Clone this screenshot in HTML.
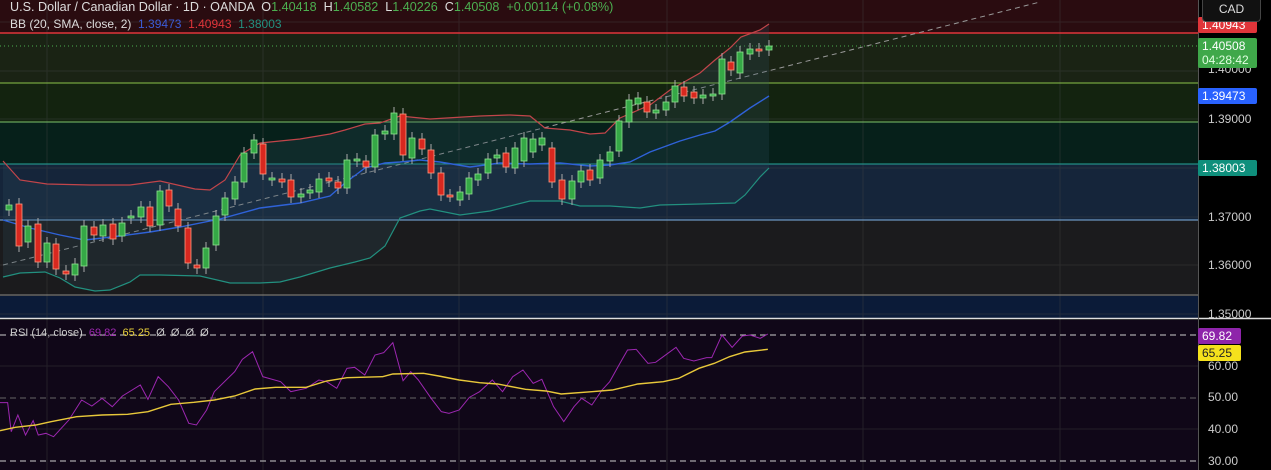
<!DOCTYPE html>
<html><head><meta charset="utf-8"><style>
html,body{margin:0;padding:0;background:#000;}
body{width:1271px;height:470px;overflow:hidden;position:relative;font-family:"Liberation Sans",sans-serif;}
.t{position:absolute;font-size:11px;white-space:nowrap;}
.lbl{position:absolute;left:1198px;width:59px;height:16px;border-radius:2px;color:#fff;font-size:12px;line-height:16px;padding-left:4px;box-sizing:border-box;}
.ax{position:absolute;left:1208px;color:#ccc;font-size:12px;}
</style></head><body>
<svg width="1271" height="470" style="position:absolute;left:0;top:0">
<rect x="0" y="0" width="1198" height="33" fill="#2a0c10"/>
<rect x="0" y="33" width="1198" height="50" fill="#1a2314"/>
<rect x="0" y="83" width="1198" height="39" fill="#13230f"/>
<rect x="0" y="122" width="1198" height="42" fill="#06201a"/>
<rect x="0" y="164" width="1198" height="56" fill="#15253a"/>
<rect x="0" y="220" width="1198" height="76" fill="#1b1b1d"/>
<rect x="0" y="296" width="1198" height="22" fill="#0b1b38"/>
<rect x="0" y="320" width="1198" height="150" fill="#100718"/>
<rect x="1198" y="0" width="73" height="470" fill="#000"/>
<g stroke="#444" stroke-width="1" opacity="0.4">
<line x1="47" y1="0" x2="47" y2="470"/><line x1="263" y1="0" x2="263" y2="470"/><line x1="459" y1="0" x2="459" y2="470"/><line x1="667" y1="0" x2="667" y2="470"/><line x1="863" y1="0" x2="863" y2="470"/><line x1="1060" y1="0" x2="1060" y2="470"/>
<line x1="0" y1="22" x2="1198" y2="22"/><line x1="0" y1="71" x2="1198" y2="71"/><line x1="0" y1="119" x2="1198" y2="119"/><line x1="0" y1="168" x2="1198" y2="168"/><line x1="0" y1="217" x2="1198" y2="217"/><line x1="0" y1="265" x2="1198" y2="265"/><line x1="0" y1="314" x2="1198" y2="314"/>
<line x1="0" y1="366" x2="1198" y2="366"/><line x1="0" y1="429" x2="1198" y2="429"/>
</g>
<line x1="0" y1="398" x2="1198" y2="398" stroke="#666" stroke-dasharray="6,4"/>
<line x1="0" y1="335" x2="1198" y2="335" stroke="#ccc" stroke-dasharray="6,4"/>
<line x1="0" y1="461" x2="1198" y2="461" stroke="#ccc" stroke-dasharray="6,4"/>
<line x1="0" y1="33" x2="1198" y2="33" stroke="#e0353a" stroke-width="1.5"/>
<line x1="0" y1="46" x2="1198" y2="46" stroke="#4caf50" stroke-dasharray="1,3"/>
<line x1="0" y1="83" x2="1198" y2="83" stroke="#8bc34a"/>
<line x1="0" y1="122" x2="1198" y2="122" stroke="#7cc36a"/>
<line x1="0" y1="164" x2="1198" y2="164" stroke="#26a69a"/>
<line x1="0" y1="220" x2="1198" y2="220" stroke="#7fb3e6"/>
<line x1="0" y1="295" x2="1198" y2="295" stroke="#888"/>
<line x1="0" y1="318.5" x2="1271" y2="318.5" stroke="#ddd" stroke-width="1.5"/>
<line x1="1198.5" y1="0" x2="1198.5" y2="470" stroke="#555"/>
<line x1="3" y1="265" x2="1040" y2="2" stroke="#999" stroke-dasharray="5,4"/>
<polygon fill="#2a4a5a" opacity="0.25" points="3,161 20,180 47,184 90,185 130,185 160,181 195,189 210,190 225,180 240,155 260,143 280,141 300,139 330,134 345,130 365,124 380,123 400,116 430,119 480,116 510,115 530,116 545,128 570,130 590,134 605,133 620,118 650,105 670,90 700,73 715,60 730,48 741,37 760,30 769,24 769,168 760,177 745,195 735,203 700,204 660,205 640,208 610,206 580,206 560,201 530,201 490,211 460,215 430,209 420,211 400,218 385,246 370,258 355,262 330,268 300,277 280,282 260,283 230,283 200,276 160,275 140,275 130,282 110,290 95,291 75,287 60,278 45,272 20,273 3,277"/>
<polyline fill="none" stroke="#c2454a" stroke-width="1.2" points="3,161 20,180 47,184 90,185 130,185 160,181 195,189 210,190 225,180 240,155 260,143 280,141 300,139 330,134 345,130 365,124 380,123 400,116 430,119 480,116 510,115 530,116 545,128 570,130 590,134 605,133 620,118 650,105 670,90 700,73 715,60 730,48 741,37 760,30 769,24"/>
<polyline fill="none" stroke="#2f62d8" stroke-width="1.4" points="3,220 30,228 60,235 85,240 120,236 150,232 180,227 220,219 260,208 300,203 330,196 345,183 365,168 385,163 400,162 420,160 440,162 470,167 500,163 530,164 560,163 590,166 610,165 630,162 650,152 680,141 700,135 715,131 730,122 750,108 769,96"/>
<polyline fill="none" stroke="#22907f" stroke-width="1.2" points="3,277 20,273 45,272 60,278 75,287 95,291 110,290 130,282 140,275 160,275 200,276 230,283 260,283 280,282 300,277 330,268 355,262 370,258 385,246 400,218 420,211 430,209 460,215 490,211 530,201 560,201 580,206 610,206 640,208 660,205 700,204 735,203 745,195 760,177 769,168"/>
<g id="candles"></g>
<g transform="translate(0,310) scale(0.5102,0.33333)">
<polyline fill="none" stroke="#9c27b0" stroke-width="1" vector-effect="non-scaling-stroke" points="0,278 15,278 22,365 35,315 50,375 65,332 75,375 90,370 105,380 120,355 135,330 160,270 180,288 200,265 220,290 240,258 275,225 290,268 310,200 330,230 350,270 370,340 385,345 405,300 420,245 460,185 475,148 495,125 515,200 550,215 570,245 600,235 625,210 640,215 660,235 680,175 695,172 715,195 735,135 752,128 770,98 790,212 805,185 820,210 845,265 865,305 880,310 900,300 920,262 940,245 965,210 985,245 1005,200 1025,180 1045,220 1062,208 1085,290 1105,335 1125,290 1140,265 1160,285 1180,240 1195,215 1215,160 1230,120 1247,118 1270,160 1285,157 1300,140 1325,112 1340,145 1360,153 1385,143 1395,143 1415,75 1435,112 1455,78 1470,75 1490,85 1505,72"/>
<polyline fill="none" stroke="#e8c83a" stroke-width="1.4" vector-effect="non-scaling-stroke" points="0,362 30,352 70,345 100,335 150,320 200,315 250,313 290,305 335,283 380,277 420,270 460,258 500,237 540,232 600,232 640,213 680,203 750,200 770,192 830,190 860,198 900,210 940,218 975,222 1030,238 1070,243 1100,252 1160,245 1200,240 1250,222 1300,215 1330,205 1370,175 1400,160 1430,140 1460,126 1505,118"/>
</g>
</svg>
<div class="t" style="left:10px;top:0px;color:#ddd;font-size:12.6px">U.S. Dollar / Canadian Dollar · 1D · OANDA &nbsp;O<span style="color:#4caf50">1.40418</span> &nbsp;H<span style="color:#4caf50">1.40582</span> &nbsp;L<span style="color:#4caf50">1.40226</span> &nbsp;C<span style="color:#4caf50">1.40508</span> &nbsp;<span style="color:#4caf50">+0.00114 (+0.08%)</span></div>
<div class="t" style="left:10px;top:17px;color:#ddd;font-size:12px">BB (20, SMA, close, 2) &nbsp;<span style="color:#3b5bd6">1.39473</span> &nbsp;<span style="color:#e0353a">1.40943</span> &nbsp;<span style="color:#22907f">1.38003</span></div>
<div class="t" style="left:10px;top:327px;color:#ccc;font-size:11px">RSI (14, close) &nbsp;<span style="color:#9c27b0">69.82</span> &nbsp;<span style="color:#e8d03a">65.25</span> &nbsp;Ø &nbsp;Ø &nbsp;Ø &nbsp;Ø</div>
<div class="lbl" style="top:17px;background:#e0353a">1.40943</div>
<div style="position:absolute;left:1202px;top:0;width:57px;height:21px;border:1px solid #444;border-top:none;border-radius:0 0 4px 4px;background:#111;color:#ddd;font-size:12px;text-align:center;line-height:19px">CAD</div>
<div class="ax" style="top:62px">1.40000</div>
<div class="lbl" style="top:38px;height:30px;background:#3fa84a;line-height:14px;padding-top:1px">1.40508<br><span style="color:#e0ffe0">04:28:42</span></div>
<div class="lbl" style="top:88px;background:#2962ff">1.39473</div>
<div class="ax" style="top:112px">1.39000</div>
<div class="lbl" style="top:160px;background:#0f8f7c">1.38003</div>
<div class="ax" style="top:210px">1.37000</div>
<div class="ax" style="top:258px">1.36000</div>
<div class="ax" style="top:307px">1.35000</div>
<div class="lbl" style="top:328px;width:43px;background:#8e24aa">69.82</div>
<div class="lbl" style="top:345px;width:43px;background:#f5e11c;color:#222">65.25</div>
<div class="ax" style="top:359px">60.00</div>
<div class="ax" style="top:390px">50.00</div>
<div class="ax" style="top:422px">40.00</div>
<div class="ax" style="top:454px">30.00</div>
<script>
var c=[[9,210,205],[19,204,246],[28,242,226],[38,224,262],[47,262,243],[56,244,269],[66,271,274],[75,275,264],[84,266,226],[94,227,235],[103,236,225],[113,224,239],[122,236,223],[131,218,216],[141,217,207],[150,207,226],[160,225,191],[169,190,206],[178,209,226],[188,228,263],[197,265,268],[206,268,248],[216,245,216],[225,215,198],[235,199,182],[244,182,153],[254,153,140],[263,144,174],[272,180,178],[282,179,182],[291,180,197],[301,197,194],[310,193,190],[319,192,179],[329,178,181],[338,182,188],[347,188,160],[357,161,159],[366,161,167],[375,167,135],[385,134,131],[394,134,113],[403,114,155],[412,158,138],[422,139,149],[431,150,173],[441,173,195],[450,195,196],[460,200,192],[469,194,178],[478,180,174],[488,173,159],[497,158,155],[506,153,167],[515,168,148],[524,161,138],[533,152,139],[542,145,138],[552,148,182],[562,180,199],[572,199,181],[581,182,171],[590,170,180],[600,178,160],[610,161,152],[619,151,121],[629,122,100],[638,104,98],[647,102,112],[656,113,110],[666,110,102],[675,102,86],[684,87,96],[694,92,98],[703,98,95],[713,95,94],[722,94,59],[731,62,70],[740,73,52],[750,54,49],[759,49,51],[769,50,46]];
var s='';c.forEach(function(d){var x=d[0],o=d[1],cl=d[2],up=cl<o,t=Math.min(o,cl),b=Math.max(o,cl),h=Math.max(b-t,2);
s+='<line x1="'+x+'" x2="'+x+'" y1="'+(t-6)+'" y2="'+(b+6)+'" stroke="#aaa"/>';
s+='<rect x="'+(x-3)+'" y="'+t+'" width="6" height="'+h+'" fill="'+(up?'#35a846':'#d8281f')+'" stroke="'+(up?'#8fe28f':'#ff9a80')+'" stroke-width="0.8"/>';});
document.getElementById('candles').innerHTML=s;
</script>
</body></html>
